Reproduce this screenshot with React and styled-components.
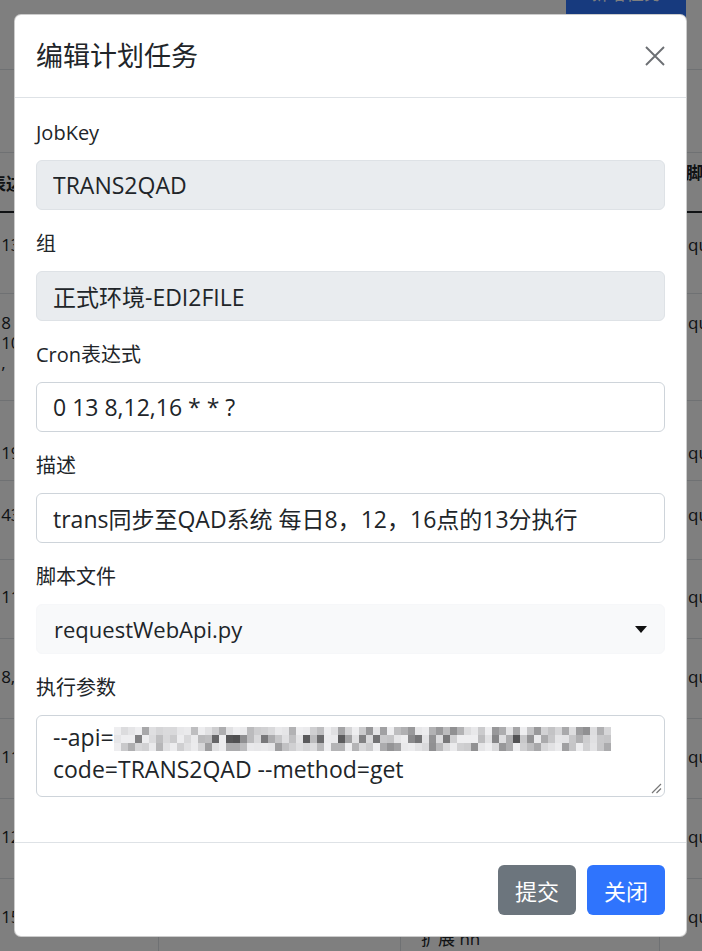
import React from 'react'
import styled, { createGlobalStyle } from 'styled-components';

const GlobalStyle = createGlobalStyle`
  html, body {
    margin: 0;
    padding: 0;
  }
  body {
    font-family: "Open Sans", "Noto Sans CJK SC", sans-serif;
    color: #212529;
  }
  * { box-sizing: border-box; }
`

// rows of the table that sits behind the dialog
const rows = [
  { h: 81, pad: 22, left: '0 13 8,12,16 * * ?', mid: '', right: 'quartzJob' },
  { h: 107, pad: 19, left: '0 8\n0 10\n0 ,', mid: '', right: 'quartzJob' },
  { h: 80, pad: 42, left: '0 19 * * * ?', mid: '', right: 'quartzJob' },
  { h: 79, pad: 24, left: '0 43 * * * ?', mid: '', right: 'quartzJob' },
  { h: 79, pad: 27, left: '0 11 * * * ?', mid: '', right: 'quartzJob' },
  { h: 80, pad: 28, left: '0 8,.', mid: '', right: 'quartzJob' },
  { h: 80, pad: 28, left: '0 11 * * * ?', mid: '', right: 'quartzJob' },
  { h: 80, pad: 28, left: '0 12 * * * ?', mid: '', right: 'quartzJob' },
  { h: 80, pad: 28, left: '0 15 * * * ?', mid: '每日同步\n扩展 nn', right: 'quartzJob' },
];

// pixelated block that hides part of the api url
const mosaic = (() => {
  let s = 11;
  const rnd = () => { s = (s * 16807) % 2147483647; return s / 2147483647; };
  const cells = [];
  for (let r = 0; r < 3; r++) {
    for (let c = 0; c < 71; c++) {
      const v = rnd();
      const depth = r === 1 ? 160 : 95;
      const g = 238 - Math.floor(v * v * depth);
      cells.push({ x: c * 7, y: r * 8, g });
    }
  }
  return cells;
})();

function Mosaic() {
  return (
    <MosaicSvg width="497" height="24" viewBox="0 0 497 24" shapeRendering="crispEdges">
      {mosaic.map((m, i) => (
        <rect key={i} x={m.x} y={m.y} width="7" height="8" fill={`rgb(${m.g},${m.g},${m.g + 2})`} />
      ))}
    </MosaicSvg>
  );
}

function App() {
  return (
    <Page>
      <GlobalStyle />

      <TopBar>
        <TopButton>新增任务</TopButton>
      </TopBar>

      <Table>
        <HeadRow h={60}>
          <Cell pad={21} indent={2}>表达式</Cell>
          <Cell pad={21}>任务名称</Cell>
          <Cell pad={21}>描述</Cell>
          <Cell pad={10} indent={26}>脚本文件</Cell>
        </HeadRow>
        {rows.map((r, i) => (
          <Row key={i} h={r.h}>
            <Cell pad={r.pad}>{r.left}</Cell>
            <Cell pad={r.pad}></Cell>
            <Cell pad={r.pad + 2} indent={20}>{r.mid}</Cell>
            <Cell pad={r.pad} indent={28}>{r.right}</Cell>
          </Row>
        ))}
      </Table>

      <Overlay />

      <Dialog>
        <Header>
          <Title>编辑计划任务</Title>
          <CloseButton aria-label="close">
            <svg width="20" height="20" viewBox="0 0 20 20">
              <path d="M1 1 L19 19 M19 1 L1 19" stroke="#6c6f73" strokeWidth="1.9" fill="none" />
            </svg>
          </CloseButton>
        </Header>

        <Body>
          <Field>
            <Label>JobKey</Label>
            <Input disabled value="TRANS2QAD" readOnly />
          </Field>
          <Field>
            <Label>组</Label>
            <Input disabled value="正式环境-EDI2FILE" readOnly />
          </Field>
          <Field>
            <Label>Cron表达式</Label>
            <Input value="0 13 8,12,16 * * ?" readOnly />
          </Field>
          <Field>
            <Label>描述</Label>
            <Input value="trans同步至QAD系统 每日8，12，16点的13分执行" readOnly />
          </Field>
          <Field>
            <Label>脚本文件</Label>
            <Select>
              <span>requestWebApi.py</span>
              <svg width="12" height="7" viewBox="0 0 12 7">
                <path d="M0 0 L12 0 L6 7 Z" fill="#111" />
              </svg>
            </Select>
          </Field>
          <Field>
            <Label>执行参数</Label>
            <TextArea>
              --api=<Mosaic /><br />
              code=TRANS2QAD --method=get
              <Grip width="11" height="11" viewBox="0 0 11 11">
                <path d="M10 1 L1 10 M10 5.5 L5.5 10" stroke="#777" strokeWidth="1.2" />
              </Grip>
            </TextArea>
          </Field>
        </Body>

        <Footer>
          <Button variant="secondary">提交</Button>
          <Button variant="primary">关闭</Button>
        </Footer>
      </Dialog>
    </Page>
  );
}

export default App;

const Page = styled.div`
  position: relative;
  width: 702px;
  height: 951px;
  overflow: hidden;
  background: #fff;
`

const TopBar = styled.div`
  height: 70px;
  border-bottom: 1px solid #dee2e6;
  display: flex;
  justify-content: flex-end;
  align-items: flex-start;
  padding-right: 16px;
`

const TopButton = styled.div`
  width: 120px;
  height: 46px;
  margin-top: -22px;
  background: #2f74fd;
  color: #fff;
  border-radius: 6px;
  display: flex;
  align-items: flex-end;
  justify-content: center;
  padding-bottom: 19px;
  font-size: 18px;
`

const Table = styled.div`
  margin-top: 82px;
  margin-left: -13px;
  border-top: 1px solid #dee2e6;
  font-size: 17px;
  line-height: 20px;
`

const Row = styled.div`
  display: grid;
  grid-template-columns: 171px 242px 259px 300px;
  height: ${props => props.h}px;
  border-bottom: 1px solid #dee2e6;
`

const HeadRow = styled(Row)`
  border-bottom: 2px solid #212529;
  font-weight: 700;
`

const Cell = styled.div`
  padding-top: ${props => props.pad || 0}px;
  padding-left: ${props => props.indent || 0}px;
  white-space: pre-line;
  & + & {
    border-left: 1px solid #dee2e6;
  }
`

const Overlay = styled.div`
  position: absolute;
  inset: 0;
  background: rgba(0, 0, 0, 0.5);
`

const Dialog = styled.div`
  position: absolute;
  top: 14px;
  left: 14px;
  width: 673px;
  background: #fff;
  border: 1px solid rgba(0, 0, 0, 0.2);
  border-radius: 7px;
  display: flex;
  flex-direction: column;
`

const Header = styled.div`
  height: 83px;
  padding: 0 21px;
  display: flex;
  align-items: center;
  justify-content: space-between;
  border-bottom: 1px solid #dee2e6;
`

const Title = styled.h5`
  margin: 0;
  font-size: 27px;
  font-weight: 400;
  line-height: 1.2;
  color: #212529;
`

const CloseButton = styled.button`
  border: 0;
  background: none;
  padding: 0;
  width: 20px;
  height: 20px;
  cursor: pointer;
  svg { display: block; }
`

const Body = styled.div`
  padding: 20px 21px 26px;
`

const Field = styled.div`
  margin-bottom: 19px;
`

const Label = styled.label`
  display: block;
  font-size: 20px;
  line-height: 30px;
  margin-bottom: 12px;
  color: #212529;
`

const Input = styled.input`
  display: block;
  width: 100%;
  height: 50px;
  padding: 0 16px;
  font-family: inherit;
  font-size: 23px;
  color: #212529;
  background: #fff;
  border: 1px solid #ced4da;
  border-radius: 6px;
  outline: none;
  &:disabled {
    background: #e9ecef;
    border-color: #dee2e6;
    color: #212529;
    opacity: 1;
  }
`

const Select = styled.div`
  height: 50px;
  margin-top: 1px;
  padding: 0 17px;
  display: flex;
  align-items: center;
  justify-content: space-between;
  font-size: 22px;
  background: #f8f9fa;
  border: 1px solid #f6f7f9;
  border-radius: 6px;
`

const TextArea = styled.div`
  position: relative;
  height: 82px;
  padding: 5px 16px 0;
  font-size: 23px;
  line-height: 32px;
  border: 1px solid #ced4da;
  border-radius: 6px;
  white-space: nowrap;
  overflow: hidden;
`

const MosaicSvg = styled.svg`
  vertical-align: -5px;
`

const Grip = styled.svg`
  position: absolute;
  right: 2px;
  bottom: 2px;
`

const Footer = styled.div`
  border-top: 1px solid #dee2e6;
  padding: 22px 21px 21px;
  display: flex;
  justify-content: flex-end;
  gap: 11px;
`

const Button = styled.button`
  height: 50px;
  padding: 0 17px;
  font-family: inherit;
  font-size: 22px;
  color: #fff;
  border: 0;
  border-radius: 6px;
  background: ${props => props.variant === 'primary' ? '#2f74fd' : '#6c757d'};
  cursor: pointer;
`
